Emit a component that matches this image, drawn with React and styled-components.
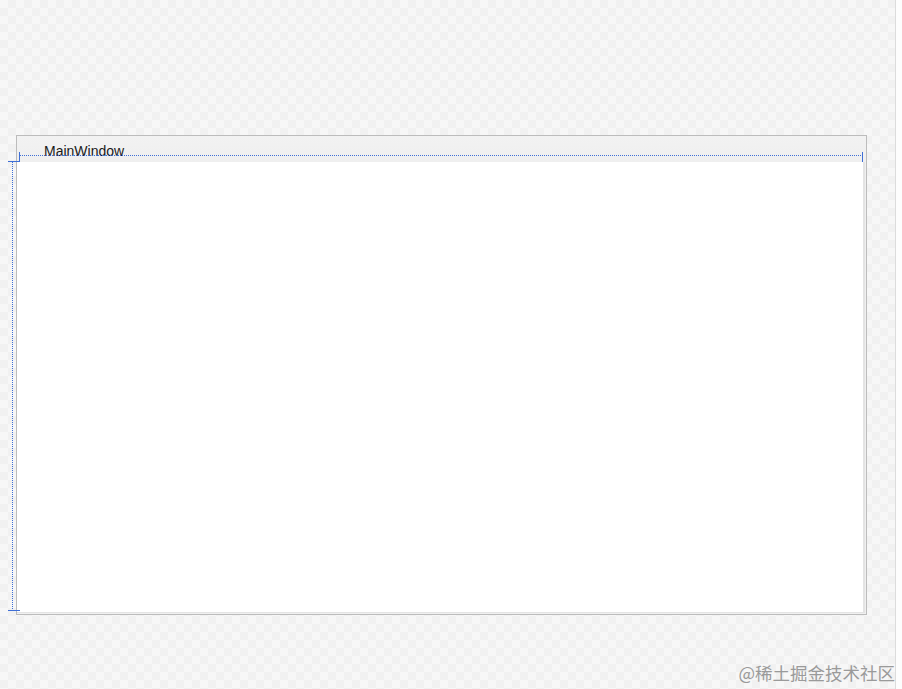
import React from "react";
import styled, { createGlobalStyle } from "styled-components";

const Global = createGlobalStyle`
  html, body { margin: 0; padding: 0; }
  body {
    width: 902px;
    height: 689px;
    overflow: hidden;
    font-family: "Liberation Sans", Arial, sans-serif;
  }
`;

const GUIDE = "#3f6fd6";

const Screen = styled.div`
  position: relative;
  display: flex;
  width: 902px;
  height: 689px;
`;

const Canvas = styled.div`
  position: relative;
  flex: 0 0 895px;
  height: 100%;
  box-sizing: border-box;
  padding: 135px 0 0 16px;
  background-color: #f7f7f7;
  background-image:
    linear-gradient(45deg, #f1f1f1 25%, transparent 25%, transparent 75%, #f1f1f1 75%),
    linear-gradient(45deg, #f1f1f1 25%, transparent 25%, transparent 75%, #f1f1f1 75%);
  background-size: 16px 16px;
  background-position: 0 0, 8px 8px;
`;

const SideStrip = styled.div`
  flex: 1;
  border-left: 1px solid #dcdcdc;
  background: #fdfdfd;
`;

const Window = styled.div`
  width: 851px;
  height: 480px;
  box-sizing: border-box;
  border: 1px solid #bcbcbc;
  display: flex;
  flex-direction: column;
  background: #f0f0f0;
`;

const TitleBar = styled.div`
  flex: 0 0 26px;
  box-sizing: border-box;
  padding: 8px 0 0 27px;
  font-size: 14px;
  line-height: 14px;
  color: #1a1a1a;
  background: linear-gradient(#f2f2f2, #efefef);
`;

const Client = styled.div`
  flex: 1;
  margin: 0 1px 1px 0;
  background: #ffffff;
  border-right: 2px solid #e4e4e4;
  border-bottom: 1px solid #e4e4e4;
`;

/* width adorner: dotted line between two end ticks, drawn over the title bar */
const WidthGuide = styled.div`
  position: absolute;
  left: 19px;
  top: 152px;
  width: 844px;
  height: 10px;
  box-sizing: border-box;
  border-left: 1px solid ${GUIDE};
  border-right: 1px solid ${GUIDE};
  &::before {
    content: "";
    position: absolute;
    left: 0;
    right: 0;
    top: 3px;
    height: 1px;
    background: repeating-linear-gradient(to right, ${GUIDE} 0 1px, transparent 1px 2px);
  }
`;

/* height adorner: dotted line between two end ticks, left of the window */
const HeightGuide = styled.div`
  position: absolute;
  left: 8px;
  top: 161px;
  width: 12px;
  height: 450px;
  box-sizing: border-box;
  border-top: 1px solid ${GUIDE};
  border-bottom: 1px solid ${GUIDE};
  &::before {
    content: "";
    position: absolute;
    top: 0;
    bottom: 0;
    left: 4px;
    width: 1px;
    background: repeating-linear-gradient(to bottom, ${GUIDE} 0 1px, transparent 1px 2px);
  }
`;

const Watermark = styled.div`
  position: absolute;
  right: 7px;
  bottom: 6px;
  font-family: "Noto Sans CJK SC", "Liberation Sans", sans-serif;
  font-size: 17.5px;
  line-height: 20px;
  color: #9a9a9a;
`;

export default function App() {
  return (
    <>
      <Global />
      <Screen>
        <Canvas>
          <Window>
            <TitleBar>MainWindow</TitleBar>
            <Client />
          </Window>
          <WidthGuide />
          <HeightGuide />
        </Canvas>
        <SideStrip />
        <Watermark>@稀土掘金技术社区</Watermark>
      </Screen>
    </>
  );
}
